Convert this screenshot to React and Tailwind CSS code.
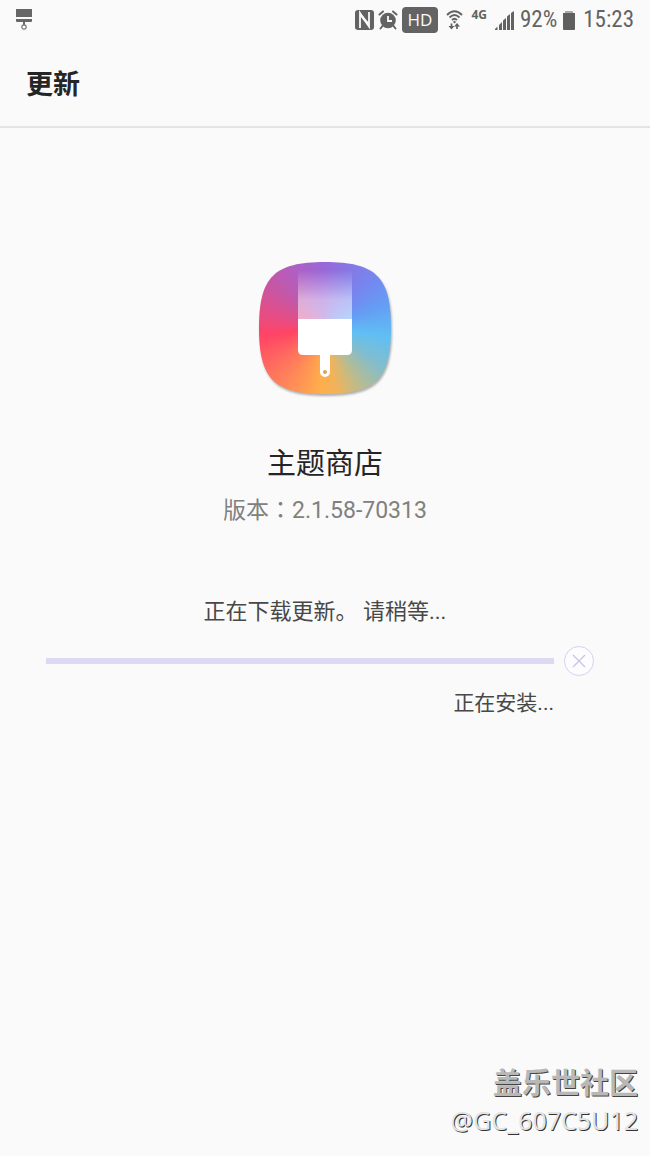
const SQUIRCLE = 'M66 0C117 0 132 15 132 66S117 132 66 132S0 117 0 66S15 0 66 0Z';

function BrushIcon() {
    return (
        <svg className="w-4 h-[22px]" viewBox="0 0 16 22" fill="none">
            <path fill="#666" d="M0 0h16v8H0zM0 10h16v2q0 1-1 1H1q-1 0-1-1zM7 13h2v3H7z" />
            <circle cx="8" cy="18" r="2.200" stroke="#777" strokeWidth="1.200" />
        </svg>
    );
}

function NfcIcon() {
    return (
        <svg className="w-[19px] h-5" viewBox="0 0 19 20" fill="none">
            <rect width="19" height="20" rx="3" fill="#636363" />
            <path d="M5 18V3L14 16.500V2" stroke="#fafafa" strokeWidth="1.800" />
            <path d="M5 2.500L14 13V17L5 6Z" fill="#fafafa" />
        </svg>
    );
}

function AlarmIcon() {
    return (
        <svg className="w-5 h-5" viewBox="0 0 19 20" fill="none">
            <circle cx="9.500" cy="10.500" r="7.800" fill="#636363" />
            <path d="M1 4.500L4.500 1.500M18 4.500L14.500 1.500M4 16L2 18.500M15 16L17 18.500" stroke="#636363" strokeWidth="2" strokeLinecap="round" />
            <path d="M9.500 6v5h4" stroke="#fafafa" strokeWidth="1.800" />
        </svg>
    );
}

function WifiIcon() {
    return (
        <svg className="w-[17px] h-5" viewBox="0 0 17 20" fill="none" stroke="#636363">
            <path d="M1 5Q8.500-2.500 16 5M3.500 7.500Q8.500 2.500 13.500 7.500M6 10Q8.500 7.500 11 10" strokeWidth="1.900" />
            <circle cx="8.500" cy="12" r="1.200" fill="#636363" stroke="none" />
            <path d="M5.500 13.500v4M11 19v-4" strokeWidth="1.700" />
            <path d="M2.500 16h6L5.500 19.500zM8 16.500h6L11 13z" fill="#636363" stroke="none" />
        </svg>
    );
}

function SignalIcon() {
    return (
        <svg className="w-[19px] h-[19px]" viewBox="0 0 19 19" fill="#636363">
            <path d="M0 19v-1l2.500-2.500V19zM4 19v-5l3-3v8zM8 19V9.500l3-2.500v12zM12 19V5.500L15 3v16zM16 19V2l3-2v19z" />
        </svg>
    );
}

function BatteryIcon() {
    return (
        <svg className="w-3 h-[19px]" viewBox="0 0 12 19" fill="#5f5f5f">
            <path fill="#aaa" d="M2 0h8v2H2z" />
            <path d="M0 2h12v16q0 1-1 1H1q-1 0-1-1z" />
        </svg>
    );
}

function StatusBar() {
    return (
        <div className="flex items-center h-10 px-4 text-[#636363]">
            <BrushIcon />
            <div className="ml-auto flex items-center">
                <NfcIcon />
                <span className="ml-1"><AlarmIcon /></span>
                <span className="ml-1 px-1.5 rounded-sm bg-[#636363] text-[#fafafa] text-[17px] leading-[26px] font-['Open_Sans',sans-serif]">HD</span>
                <span className="ml-2"><WifiIcon /></span>
                <span className="ml-2 self-start text-[12px] leading-4 font-bold font-['Open_Sans',sans-serif]">4G</span>
                <span className="ml-2"><SignalIcon /></span>
                <span className="ml-1.5 text-[23px] leading-6 font-['Roboto_Condensed',Roboto,sans-serif]">92%</span>
                <span className="ml-1.5"><BatteryIcon /></span>
                <span className="ml-2 text-[23px] leading-6 font-['Roboto_Condensed',Roboto,sans-serif]">15:23</span>
            </div>
        </div>
    );
}

function AppIcon() {
    return (
        <div className="size-[132px] drop-shadow-[1px_2px_1px_rgba(0,0,0,0.3)]">
            <svg className="size-full" viewBox="0 0 132 132">
                <defs>
                    <clipPath id="shape">
                        <path d={SQUIRCLE} />
                    </clipPath>
                    <linearGradient id="trail" x1="0" y1="0" x2="0" y2="1">
                        <stop offset="0" stopColor="#fff" stopOpacity="0" />
                        <stop offset=".6" stopColor="#fff" stopOpacity=".5" />
                        <stop offset="1" stopColor="#fff" stopOpacity=".55" />
                    </linearGradient>
                </defs>
                <foreignObject width="132" height="132" clipPath="url(#shape)">
                    <div className="size-full bg-[conic-gradient(#9868d8,#7488f0_45deg,#649ff4_70deg,#60bff4_98deg,#83bdcb_125deg,#b8bc90_148deg,#f2b35a_170deg,#ffae4c_184deg,#ff795c_225deg,#ff4465_263deg,#e94c80_280deg,#c457a6_310deg,#ad60c6_335deg,#9868d8)]" />
                </foreignObject>
                <path d="M39 8h54v50H39z" fill="url(#trail)" />
                <path d="M39 57h54v31q0 5-5 5H71v17a5 5 0 0 1-10 0V93H44q-5 0-5-5z" fill="#fff" />
                <circle cx="66" cy="110" r="2" fill="#e3a05c" />
            </svg>
        </div>
    );
}

function Progress() {
    return (
        <div className="w-full pl-[46px] pr-14 mt-[18px]">
            <div className="flex items-center gap-2.5">
                <div role="progressbar" aria-label="正在安装" className="grow h-1.5 bg-[#ded9f3]" />
                <button type="button" aria-label="取消" className="size-[30px]">
                    <svg className="size-full" viewBox="0 0 30 30" fill="none" stroke="#d5d0ee">
                        <circle cx="15" cy="15" r="14.500" fill="#fdfdff" />
                        <path d="M9 9l12 12M21 9L9 21" stroke="#c9c4e4" strokeWidth="1.300" />
                    </svg>
                </button>
            </div>
            <p className="mt-[11px] pr-10 text-right text-[21px] leading-8 text-[#484848]">正在安装...</p>
        </div>
    );
}

export default function App() {
    return (
        <div className="min-h-screen flex flex-col bg-[#fafafa] font-[Roboto,'Noto_Sans_CJK_SC',sans-serif]">
            <StatusBar />
            <header className="h-22 pt-1 px-[26px] flex items-center border-b-2 border-[#e4e4e4]">
                <h1 className="text-[27px] leading-10 font-bold text-[#252525]">更新</h1>
            </header>
            <main className="flex flex-col items-center pt-[134px]">
                <AppIcon />
                <h2 className="mt-[50px] text-[29px] leading-10 text-[#252525]">主题商店</h2>
                <p className="mt-[11px] text-[23px] leading-8 text-[#808080] font-[Roboto,'Noto_Sans_CJK_TC',sans-serif]">版本：2.1.58-70313</p>
                <p className="mt-[69px] text-[22px] leading-8 text-[#484848]">正在下载更新。 请稍等...</p>
                <Progress />
            </main>
            <footer className="mt-auto px-3 pb-5 text-right">
                <p className="text-[29px] leading-10 font-bold text-[#b8b8b8] [text-shadow:1px_1px_0_#444]">盖乐世社区</p>
                <p className="text-[25px] leading-8 text-[#e4e4e4] font-['Noto_Sans',sans-serif] [text-shadow:1px_1px_0_#333]">@GC_607C5U12</p>
            </footer>
        </div>
    );
}
